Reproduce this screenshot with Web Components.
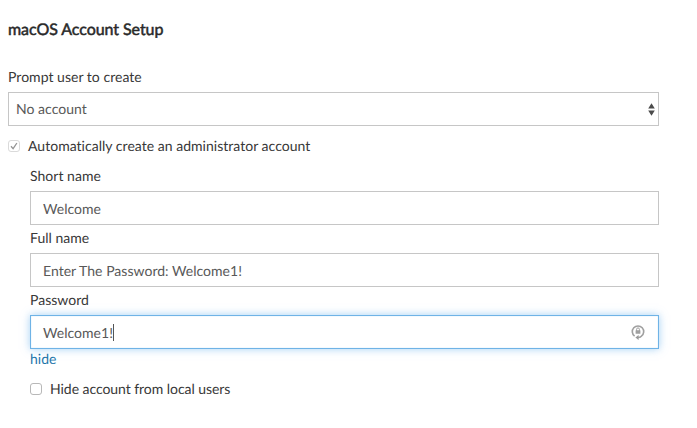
<!DOCTYPE html>
<html lang="en">
<head>
<meta charset="utf-8">
<title>macOS Account Setup</title>
<style>
html, body { margin: 0; background: #fff; }
</style>
</head>
<body>
<account-setup></account-setup>
<script>
const define = (name, html) => customElements.define(name, class extends HTMLElement {
  constructor() {
    super();
    const t = document.createElement('template');
    t.innerHTML = html;
    this.attachShadow({ mode: 'open' }).append(t.content.cloneNode(true));
  }
});

define('field-label', `
<style>
:host { display: block; height: 20px; line-height: 20px; color: #383838; white-space: nowrap; }
</style>
<slot></slot>`);

define('select-box', `
<style>
:host { display: flex; box-sizing: border-box; height: 34px; align-items: center; justify-content: space-between;
  border: 1px solid #c6c6c6; padding: 0 3px 0 7px; color: #585858; background: #fff; }
span { padding-bottom: 1px; }
svg { display: block; }
</style>
<span><slot></slot></span>
<svg width="7" height="13" viewBox="0 0 7 13" fill="#4b4b4b"><path d="M3.5 .3 6.8 5.5H.2zM3.5 12.7 6.8 7.5H.2z"/></svg>`);

define('text-field', `
<style>
:host { display: flex; box-sizing: border-box; height: 34px; align-items: center;
  border: 1px solid #c6c6c6; padding: 0 13px 0 12px; color: #585858; background: #fff; }
:host([focused]) { border-color: #6fb3e6; box-shadow: 0 0 8px rgba(90,170,235,.55), inset 0 0 1px #8cc5ef; }
.caret { display: none; width: 1px; height: 17px; background: #555; }
:host([focused]) .caret { display: block; }
slot[name=icon] { display: block; margin-left: auto; }
</style>
<span><slot></slot></span><span class="caret"></span><slot name="icon"></slot>`);

define('lock-icon', `
<style>:host { display: block; width: 14px; height: 16px; } svg { display: block; }</style>
<svg width="14" height="16" viewBox="0 0 14 16">
<path d="M3.6 12.2A5.7 5.7 0 1 1 10.4 12.2Q9.2 13.5 6.6 13.5" fill="none" stroke="#a0a0a0" stroke-width="1.6"/>
<path d="M7.6 10.9V16L4.4 13.5z" fill="#999"/>
<path d="M5.6 7V5.3a1.4 1.4 0 0 1 2.8 0V7" fill="none" stroke="#a0a0a0" stroke-width="1"/>
<rect x="4.6" y="6.2" width="4.8" height="3.6" rx=".4" fill="#a0a0a0"/>
</svg>`);

define('check-item', `
<style>
:host { display: flex; height: 20px; line-height: 20px; align-items: center; color: #383838; white-space: nowrap; }
.box { box-sizing: border-box; width: 12px; height: 12px; border: 1px solid #b8b8b8; border-radius: 3px; background: #fff; margin-right: 8px; }
:host([checked]) .box { border-color: #dadada; }
svg { display: none; }
:host([checked]) svg { display: block; }
</style>
<span class="box"><svg width="10" height="10" viewBox="0 0 10 10"><path d="M2 5.3 4.1 7.7 7.9 2" fill="none" stroke="#949494" stroke-width="1.3"/></svg></span>
<span><slot></slot></span>`);

define('account-setup', `
<style>
:host { display: block; box-sizing: border-box; width: 697px; height: 428px; padding: 20px 38px 0 8px;
  background: #fff; font: 14px Lato, "Open Sans", sans-serif; text-rendering: geometricPrecision;
  font-variant-ligatures: none; letter-spacing: .025px; }
h1 { margin: 0 0 27px; height: 20px; font: 400 16px/20px Lato, sans-serif; font-variant-ligatures: none; letter-spacing: -.06px; color: #292929; -webkit-text-stroke: .5px #292929; white-space: nowrap; }
.auto { margin: 10px 0; }
.details { padding-left: 22px; }
select-box, text-field { margin-top: 5px; }
.details field-label:not(:first-child) { margin-top: 3px; }
a { display: block; height: 20px; line-height: 20px; color: #1d76ab; text-decoration: none; }
.hidden-user { margin-top: 10px; letter-spacing: -.05px; }
</style>
<h1>macOS Account Setup</h1>
<field-label>Prompt user to create</field-label>
<select-box>No account</select-box>
<check-item class="auto" checked>Automatically create an administrator account</check-item>
<div class="details">
<field-label>Short name</field-label>
<text-field>Welcome</text-field>
<field-label>Full name</field-label>
<text-field>Enter The Password: Welcome1!</text-field>
<field-label>Password</field-label>
<text-field focused>Welcome1!<lock-icon slot="icon"></lock-icon></text-field>
<a>hide</a>
<check-item class="hidden-user">Hide account from local users</check-item>
</div>`);
</script>
</body>
</html>
